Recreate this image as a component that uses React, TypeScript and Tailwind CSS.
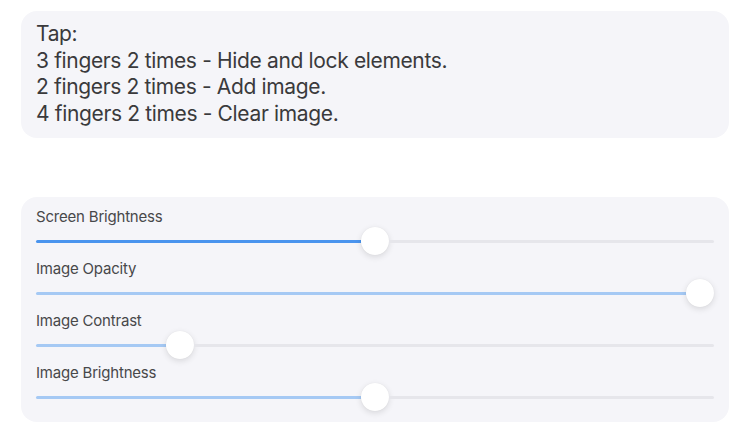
const sliders = [
  { label: "Screen Brightness", value: 0.5, fill: "bg-[#4a94ee]" },
  { label: "Image Opacity", value: 1, fill: "bg-[#a5c9f4]" },
  { label: "Image Contrast", value: 0.2, fill: "bg-[#a5c9f4]" },
  { label: "Image Brightness", value: 0.5, fill: "bg-[#a5c9f4]" },
];

// Filled segment, thumb, then the rest of the track, laid out in one flex row
const Slider = ({ value, fill }: { value: number; fill: string }) => (
  <div className="flex h-7 w-full items-center">
    <div className={`h-[3px] basis-0 rounded-l-full ${fill}`} style={{ flexGrow: value }} />
    <div className="h-7 w-7 shrink-0 rounded-full bg-white shadow-[0_2px_6px_rgba(0,0,0,0.12),0_0_1px_rgba(0,0,0,0.08)]" />
    <div className="h-[3px] basis-0 rounded-r-full bg-[#e6e6eb]" style={{ flexGrow: 1 - value }} />
  </div>
);

export default function App() {
  return (
    <div className="min-h-[422px] w-[750px] bg-white pt-[11px] font-['Inter',sans-serif] text-[#3a3a3c]">
      <div className="mx-[21px] rounded-2xl bg-[#f5f5f9] px-[15px] pt-[10px] pb-[11px] text-[21px] leading-[26.5px] tracking-[-0.35px]">
        <p>Tap:</p>
        <p>3 fingers 2 times - Hide and lock elements.</p>
        <p>2 fingers 2 times - Add image.</p>
        <p>4 fingers 2 times - Clear image.</p>
      </div>

      <div className="mx-[21px] mt-[59px] flex flex-col gap-1 rounded-2xl bg-[#f5f5f9] px-[15px] pt-[10px] pb-[11px]">
        {sliders.map((s) => (
          <div key={s.label} className="flex flex-col">
            <span className="h-5 text-[15px] leading-5 tracking-[-0.2px] text-[#48484a]">{s.label}</span>
            <Slider value={s.value} fill={s.fill} />
          </div>
        ))}
      </div>
    </div>
  );
}
